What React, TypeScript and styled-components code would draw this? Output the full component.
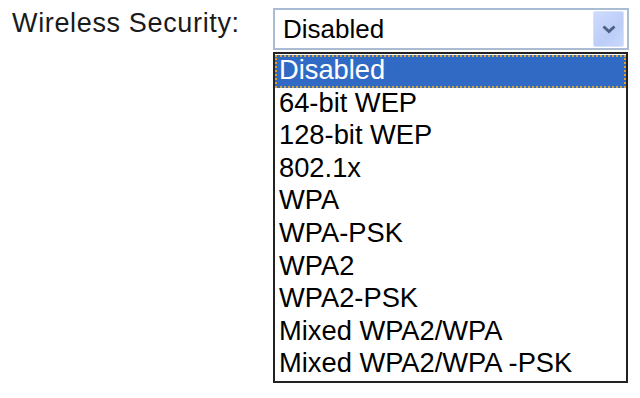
import React from "react";
import styled, { createGlobalStyle } from "styled-components";

const Global = createGlobalStyle`
  html, body { margin: 0; padding: 0; background: #ffffff; }
  body { width: 640px; height: 398px; overflow: hidden; }
`;

const Page = styled.div`
  display: flex;
  align-items: flex-start;
  padding: 8px 0 0 12px;
  font-family: "Liberation Sans", Arial, sans-serif;
  color: #000;
`;

const Label = styled.div`
  width: 261px;
  font-size: 27px;
  line-height: 30px;
  letter-spacing: 0.65px;
  color: #1a1a1a;
`;

const Field = styled.div`
  display: flex;
  flex-direction: column;
  width: 356px;
`;

const SelectBox = styled.div`
  box-sizing: border-box;
  height: 42px;
  border: 2px solid #a9bcd4;
  background: #fff;
  display: flex;
  align-items: center;
  justify-content: space-between;
  padding: 0 3px 0 8px;
`;

const SelectValue = styled.span`
  font-size: 26px;
  line-height: 30px;
  color: #000;
`;

const ArrowButton = styled.div`
  box-sizing: border-box;
  width: 31px;
  height: 36px;
  border: 1px solid #d6e2fb;
  border-radius: 2px;
  background: linear-gradient(135deg, #cddbfd 0%, #bccdf7 60%, #c9d8fb 100%);
  display: flex;
  align-items: center;
  justify-content: center;
`;

const List = styled.div`
  box-sizing: border-box;
  margin-top: 2px;
  width: 355px;
  border: 2px solid #222;
  background: #fff;
  padding: 1px 0 0 0;
`;

const Option = styled.div<{ $selected?: boolean }>`
  box-sizing: border-box;
  height: 32.6px;
  line-height: 30px;
  padding-left: 4px;
  font-size: 27.3px;
  white-space: nowrap;
  color: ${(p) => (p.$selected ? "#fff" : "#000")};
  background: ${(p) => (p.$selected ? "#316ac5" : "transparent")};
  outline: ${(p) => (p.$selected ? "2px dotted #d8a43a" : "none")};
  outline-offset: -2px;
`;

const options = [
  "Disabled",
  "64-bit WEP",
  "128-bit WEP",
  "802.1x",
  "WPA",
  "WPA-PSK",
  "WPA2",
  "WPA2-PSK",
  "Mixed WPA2/WPA",
  "Mixed WPA2/WPA -PSK",
];

export default function App() {
  return (
    <>
      <Global />
      <Page>
        <Label>Wireless Security:</Label>
        <Field>
          <SelectBox>
            <SelectValue>Disabled</SelectValue>
            <ArrowButton>
              <svg width="14" height="10" viewBox="0 0 14 10">
                <path d="M1.5 2.5 L7 7.5 L12.5 2.5" fill="none" stroke="#4d6185" strokeWidth="3" />
              </svg>
            </ArrowButton>
          </SelectBox>
          <List>
            {options.map((o, i) => (
              <Option key={o} $selected={i === 0}>
                {o}
              </Option>
            ))}
          </List>
        </Field>
      </Page>
    </>
  );
}
